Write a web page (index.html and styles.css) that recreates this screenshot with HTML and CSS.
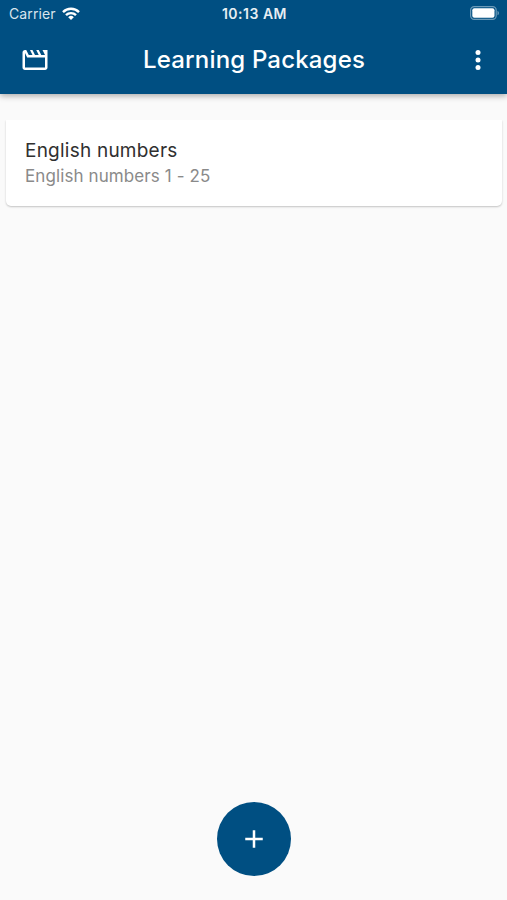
FILE: index.html
```html
<!DOCTYPE html>
<html lang="en">
    <head>
        <meta charset="utf-8">
        <title>Learning Packages</title>
        <link rel="stylesheet" href="styles.css">
    </head>
    <body>

<div class="header">
    <div class="status">
        <div class="carrier">
            <span>Carrier</span>
            <svg class="wifi" viewBox="0 0 18 13">
                <path d="M1 5.1a11.3 11.3 0 0 1 16 0" />
                <path d="M4 8.2a7 7 0 0 1 10 0" />
                <path class="dot" d="M9 13L6.2 10.2a4 4 0 0 1 5.6 0z" />
            </svg>
        </div>
        <div class="time">10:13 AM</div>
        <div class="power">
            <svg class="battery" viewBox="0 0 30 14">
                <rect class="shell" x="0.6" y="0.6" width="25.6" height="12.8" rx="3.6" />
                <rect x="2.3" y="2.3" width="22.2" height="9.4" rx="2" />
                <path class="cap" d="M27.5 4.7a2.5 2.5 0 0 1 0 4.6z" />
            </svg>
        </div>
    </div>
    <div class="toolbar">
        <svg class="icon" viewBox="0 0 24 24">
            <path d="M4 6.47L5.76 10H20v8H4V6.47M22 4h-4l2 4h-3l-2-4h-2l2 4h-3l-2-4H8l2 4H7L5 4H4c-1.1 0-1.99.9-1.99 2L2 18c0 1.1.9 2 2 2h16c1.1 0 2-.9 2-2V4z" />
        </svg>
        <h1>Learning Packages</h1>
        <svg class="icon" viewBox="0 0 24 24">
            <circle cx="12" cy="6" r="2" />
            <circle cx="12" cy="12" r="2" />
            <circle cx="12" cy="18" r="2" />
        </svg>
    </div>
</div>

<div class="list">
    <div class="card">
        <div class="name">English numbers</div>
        <div class="desc">English numbers 1 - 25</div>
    </div>
</div>

<div class="footer">
    <button class="add" aria-label="Add">
        <svg class="icon" viewBox="0 0 24 24">
            <path d="M19 13h-6v6h-2v-6H5v-2h6V5h2v6h6z" />
        </svg>
    </button>
</div>

    </body>
</html>
```
FILE: styles.css
```css
* {
    box-sizing: border-box;
}

body {
    margin: 0;
    height: 900px;
    display: flex;
    flex-direction: column;
    background: #fafafa;
    font-family: Inter, "Liberation Sans", sans-serif;
}

svg {
    display: block;
}

.header {
    height: 94px;
    background: #004f82;
    color: #fff;
    box-shadow: 0 2px 6px rgba(0, 0, 0, 0.32);
}

/* Phone status bar */
.status {
    height: 26px;
    padding: 1px 7px 0 9px;
    display: grid;
    grid-template-columns: 1fr auto 1fr;
    align-items: center;
    font-size: 14px;
    line-height: 25px;
}

.carrier {
    display: flex;
    align-items: center;
    gap: 6px;
    color: #d9e5ed;
    letter-spacing: 0.1px;
}

.wifi {
    width: 18px;
    height: 13px;
    fill: none;
    stroke: #fff;
    stroke-width: 2.4;
}

.wifi .dot {
    fill: #fff;
    stroke: none;
}

.time {
    font-weight: 600;
    letter-spacing: 0.5px;
    color: #e6eef3;
}

.power {
    display: flex;
    justify-content: flex-end;
}

.battery {
    width: 30px;
    height: 14px;
    margin-bottom: 1px;
    fill: #fff;
}

.battery .shell {
    fill: none;
    stroke: #6b9ab8;
    stroke-width: 1.2;
}

.battery .cap {
    fill: #6b9ab8;
}

.toolbar {
    height: 67px;
    padding: 0 14px 0 20px;
    display: flex;
    align-items: center;
    justify-content: space-between;
}

h1 {
    margin: 0 5px 0 0;
    font-size: 24px;
    font-weight: 500;
    line-height: 30px;
    letter-spacing: 0.18px;
}

.icon {
    width: 30px;
    height: 30px;
    fill: #fff;
}

/* The card's top edge is cut off by the list */
.list {
    flex: 1;
    margin-top: 26px;
    padding: 0 5px 0 6px;
    overflow: hidden;
}

.card {
    height: 86px;
    padding: 18px 19px;
    background: #fff;
    border-radius: 0 0 5px 5px;
    box-shadow: 0 1px 2px rgba(0, 0, 0, 0.22);
}

.name {
    font-size: 19px;
    line-height: 25px;
    letter-spacing: 0.23px;
    color: #303030;
}

.desc {
    font-size: 17px;
    line-height: 26px;
    letter-spacing: 0.1px;
    color: #8a8a8a;
}

.footer {
    height: 98px;
    display: flex;
    justify-content: center;
}

.add {
    width: 74px;
    height: 74px;
    padding: 0;
    border: 0;
    border-radius: 50%;
    background: #004f82;
    display: flex;
    align-items: center;
    justify-content: center;
}
```
